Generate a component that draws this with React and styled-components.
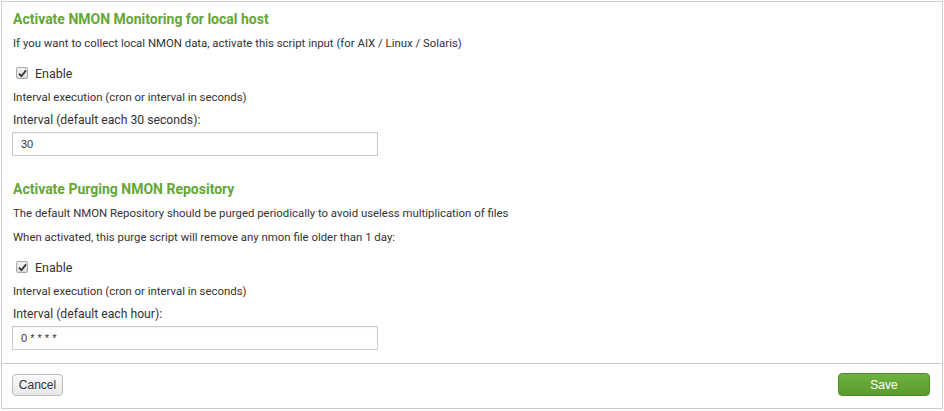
import React from 'react';
import styled, { createGlobalStyle } from 'styled-components';

const GlobalStyle = createGlobalStyle`
    html, body {
        margin: 0;
        padding: 0;
        background: #ffffff;
    }
    body {
        font-family: Roboto, "Noto Sans", sans-serif;
        color: #333333;
    }
`;

function Section({ title, notes, label, value }) {
    return (
        <Block>
            <Title>{title}</Title>
            {notes.map((n) => (
                <Note key={n}>{n}</Note>
            ))}
            <CheckRow>
                <CheckBox>
                    <svg width="9" height="9" viewBox="0 0 9 9">
                        <path d="M1 4.6 L3.4 7.2 L8 1.4" fill="none" stroke="#333" strokeWidth="1.8" />
                    </svg>
                </CheckBox>
                <CheckLabel>Enable</CheckLabel>
            </CheckRow>
            <Hint>Interval execution (cron or interval in seconds)</Hint>
            <FieldLabel>{label}</FieldLabel>
            <Input type="text" defaultValue={value} />
        </Block>
    );
}

function App() {
    return (
        <>
            <GlobalStyle />
            <Panel>
                <Body>
                    <Section
                        title="Activate NMON Monitoring for local host"
                        notes={['If you want to collect local NMON data, activate this script input (for AIX / Linux / Solaris)']}
                        label="Interval (default each 30 seconds):"
                        value="30"
                    />
                    <Section
                        title="Activate Purging NMON Repository"
                        notes={[
                            'The default NMON Repository should be purged periodically to avoid useless multiplication of files',
                            'When activated, this purge script will remove any nmon file older than 1 day:',
                        ]}
                        label="Interval (default each hour):"
                        value="0 * * * *"
                    />
                </Body>
                <Footer>
                    <Button>Cancel</Button>
                    <Button primary>Save</Button>
                </Footer>
            </Panel>
        </>
    );
}

export default App;

const Panel = styled.div`
    margin: 1px;
    width: 942px;
    height: 408px;
    box-sizing: border-box;
    border: 1px solid #cccccc;
    display: flex;
    flex-direction: column;
`;

const Body = styled.div`
    flex: 1;
    padding: 8px 10px 0 11px;
    display: flex;
    flex-direction: column;
    gap: 24px;
`;

const Block = styled.div`
    display: flex;
    flex-direction: column;
`;

const Title = styled.h3`
    margin: 0 0 8px;
    font-size: 14px;
    line-height: 18px;
    font-weight: 700;
    color: #65a637;
`;

const Note = styled.p`
    margin: 0 0 10px;
    font-size: 11.4px;
    line-height: 14px;
`;

const Hint = styled(Note)`
    margin-bottom: 8px;
`;

const CheckRow = styled.label`
    display: flex;
    align-items: center;
    gap: 7px;
    margin: 3px 0 7px 3px;
    height: 20px;
`;

const CheckBox = styled.span`
    width: 10px;
    height: 10px;
    border: 1px solid #a8a8a8;
    border-radius: 2px;
    background: linear-gradient(#f2f2f2, #dcdcdc);
    display: flex;
    align-items: center;
    justify-content: center;
`;

const CheckLabel = styled.span`
    font-size: 12.5px;
`;

const FieldLabel = styled.div`
    font-size: 12.2px;
    line-height: 16px;
    margin: 0 0 4px;
`;

const Input = styled.input`
    width: 366px;
    height: 24px;
    margin-left: -1px;
    box-sizing: border-box;
    border: 1px solid #cccccc;
    padding: 0 8px;
    font-family: "Liberation Sans", Arial, sans-serif;
    font-size: 11px;
    color: #333333;
    outline: none;
    box-shadow: inset 0 1px 1px rgba(0, 0, 0, 0.05);
`;

const Footer = styled.div`
    border-top: 1px solid #cccccc;
    height: 45px;
    box-sizing: border-box;
    padding: 9px 12px 0 10px;
    display: flex;
    align-items: flex-start;
    justify-content: space-between;
`;

const Button = styled.button`
    font-family: "Liberation Sans", Arial, sans-serif;
    font-size: 12px;
    height: ${(p) => (p.primary ? '23px' : '22px')};
    width: ${(p) => (p.primary ? '92px' : '51px')};
    margin-top: ${(p) => (p.primary ? '0' : '1px')};
    padding: 0;
    border-radius: 4px;
    cursor: pointer;
    color: ${(p) => (p.primary ? '#ffffff' : '#2e3440')};
    border: 1px solid ${(p) => (p.primary ? '#4f8a2a' : '#bbbbbb')};
    background: ${(p) =>
        p.primary
            ? 'linear-gradient(#6db33f, #5a9a2f)'
            : 'linear-gradient(#fafafa, #e8e8e8)'};
`;
